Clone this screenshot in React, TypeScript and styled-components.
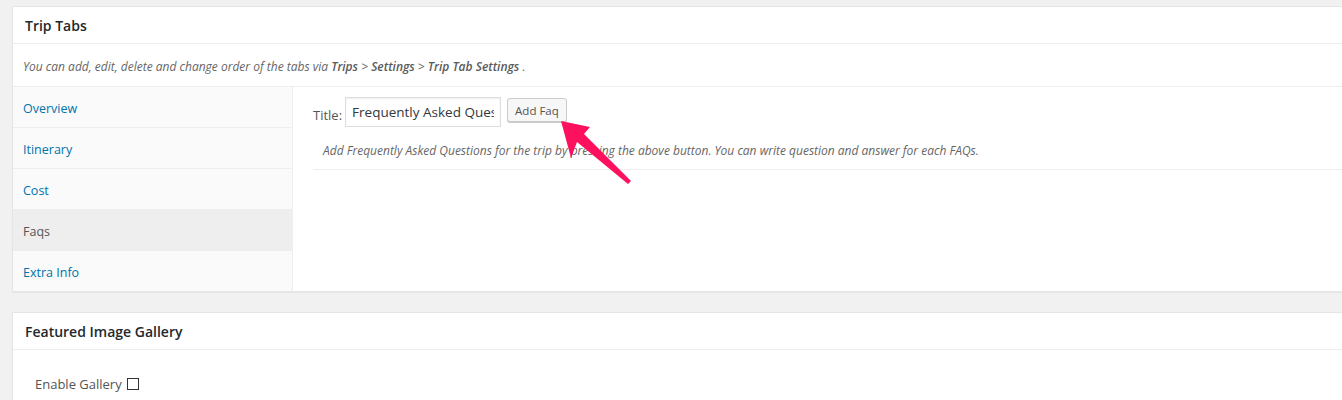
import React from "react"
import styled, { createGlobalStyle } from "styled-components"

const GlobalStyle = createGlobalStyle`
  html, body {
    margin: 0;
    padding: 0;
    background: #f1f1f1;
    overflow: hidden;
  }
  body {
    font-family: "Open Sans", "Noto Sans", sans-serif;
    font-size: 13px;
    color: #444;
  }
`

const tabs = ["Overview", "Itinerary", "Cost", "Faqs", "Extra Info"]

const Page = styled.div`
  padding: 6px 0 0 12px;
  width: 1400px;
`

const Postbox = styled.div`
  position: relative;
  background: #fff;
  border: 1px solid #e5e5e5;
  box-shadow: 0 1px 1px rgba(0, 0, 0, 0.04);
  margin-bottom: 20px;
`

const Handle = styled.h2`
  margin: 0;
  height: 37px;
  box-sizing: border-box;
  padding: 0 12px;
  display: flex;
  align-items: center;
  font-size: 14px;
  font-weight: 600;
  color: #23282d;
  border-bottom: 1px solid #eee;
`

const Notice = styled.div`
  height: 43px;
  box-sizing: border-box;
  padding: 3px 10px 0;
  display: flex;
  align-items: center;
  font-size: 12px;
  font-style: italic;
  color: #666;
  border-bottom: 1px solid #eee;

  strong {
    font-weight: 600;
    color: #5a5a5a;
  }
`

const TabsWrap = styled.div`
  display: flex;
`

const TabList = styled.ul`
  list-style: none;
  margin: 0;
  padding: 0;
  width: 279px;
  background: #fafafa;
  border-right: 1px solid #eee;
`

const Tab = styled.li<{ $active?: boolean }>`
  height: 41px;
  box-sizing: border-box;
  display: flex;
  align-items: center;
  padding: 2px 10px 0;
  font-size: 12.5px;
  color: ${({ $active }) => ($active ? "#555" : "#0073aa")};
  background: ${({ $active }) => ($active ? "#eee" : "transparent")};
  border-bottom: 1px solid #eee;

  &:last-child {
    border-bottom: none;
    height: 40px;
  }
`

const TabPanel = styled.div`
  flex: 1;
  padding: 10px 0 0 20px;
`

const TitleRow = styled.div`
  display: flex;
  align-items: flex-start;
  gap: 6px;
`

const Label = styled.label`
  font-size: 13px;
  color: #555;
  margin-top: 9px;
  margin-right: -3px;
`

const TextInput = styled.input`
  width: 156px;
  height: 30px;
  box-sizing: border-box;
  border: 1px solid #ddd;
  box-shadow: inset 0 1px 2px rgba(0, 0, 0, 0.07);
  padding: 0 6px;
  font-family: "Open Sans", "Noto Sans", sans-serif;
  font-size: 13.5px;
  color: #32373c;
  outline: none;
`

const Button = styled.button`
  margin-top: 1px;
  height: 24px;
  padding: 0 7px;
  border: 1px solid #ccc;
  border-radius: 3px;
  background: #f7f7f7;
  box-shadow: 0 1px 0 #ccc;
  font-family: "Open Sans", "Noto Sans", sans-serif;
  font-size: 11.5px;
  color: #555;
`

const Help = styled.p`
  margin: 0;
  padding: 15px 10px 0;
  height: 43px;
  box-sizing: border-box;
  font-size: 12px;
  font-style: italic;
  color: #666;
  border-bottom: 1px solid #eee;
`

const Arrow = styled.svg`
  position: absolute;
  left: 542px;
  top: 103px;
  pointer-events: none;
`

const Field = styled.div`
  padding: 25px 22px 10px;
  display: flex;
  align-items: center;
  gap: 5px;
  font-size: 13px;
  color: #555;
`

const Check = styled.span`
  width: 12px;
  height: 12px;
  border: 1px solid #333;
  box-sizing: border-box;
  display: inline-block;
`

export default function App() {
  return (
    <Page>
      <GlobalStyle />
      <Postbox>
        <Handle>Trip Tabs</Handle>
        <Notice>
          <span>
            You can add, edit, delete and change order of the tabs via{" "}
            <strong>Trips</strong> &gt; <strong>Settings</strong> &gt;{" "}
            <strong>Trip Tab Settings</strong> .
          </span>
        </Notice>
        <TabsWrap>
          <TabList>
            {tabs.map((t) => (
              <Tab key={t} $active={t === "Faqs"}>
                {t}
              </Tab>
            ))}
          </TabList>
          <TabPanel>
            <TitleRow>
              <Label>Title:</Label>
              <TextInput readOnly value="Frequently Asked Questions" />
              <Button>Add Faq</Button>
            </TitleRow>
            <Help>
              Add Frequently Asked Questions for the trip by pressing the above
              button. You can write question and answer for each FAQs.
            </Help>
          </TabPanel>
        </TabsWrap>
        <Arrow width="80" height="80" viewBox="0 0 80 80">
          <polygon
            fill="#fd115e"
            points="6,11 35,17 29,24 76,71 73,74 22,32 16,48"
          />
        </Arrow>
      </Postbox>
      <Postbox>
        <Handle>Featured Image Gallery</Handle>
        <Field>
          Enable Gallery <Check />
        </Field>
      </Postbox>
    </Page>
  )
}
